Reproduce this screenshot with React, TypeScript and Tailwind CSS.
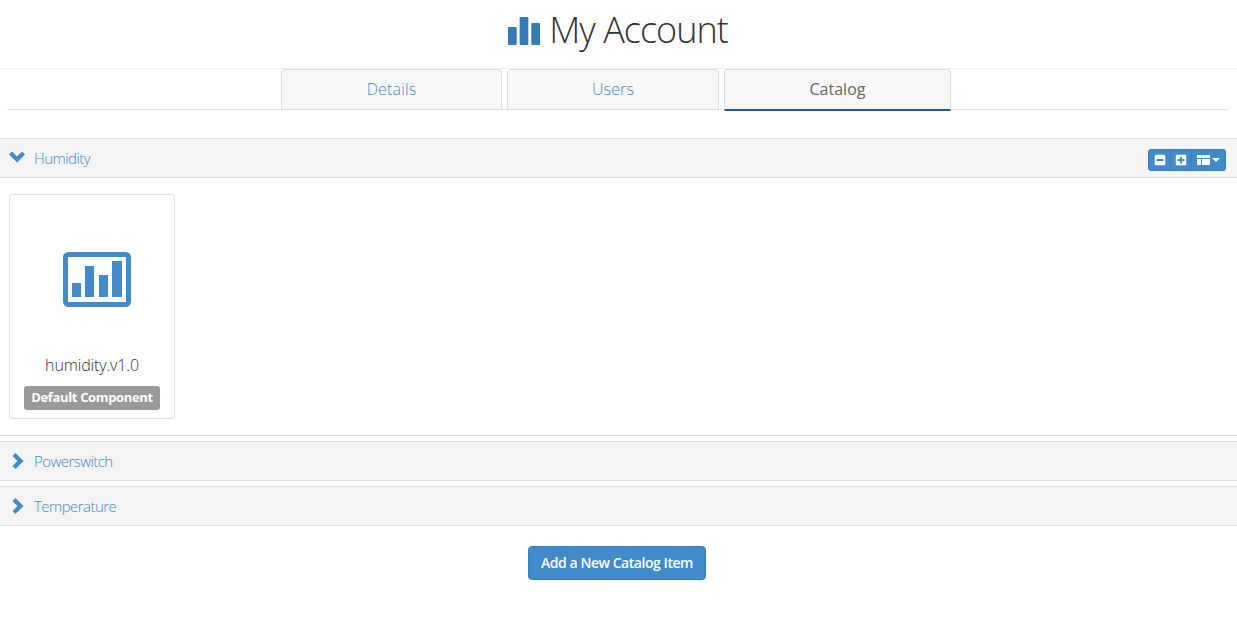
import { FaMinusSquare, FaPlusSquare } from "react-icons/fa"

const font = "font-['Open_Sans',sans-serif]"

const HeaderIcon = () => (
  <svg width="32" height="28" viewBox="0 0 33 28" preserveAspectRatio="none" className="mt-[2px]">
    <rect x="0" y="10" width="9" height="18" rx="1" fill="#337ab7" />
    <rect x="12" y="0" width="9" height="28" rx="1" fill="#337ab7" />
    <rect x="24" y="6" width="9" height="22" rx="1" fill="#337ab7" />
  </svg>
)

const ChartIcon = () => (
  <svg width="68" height="55" viewBox="0 0 68 55">
    <rect x="2.5" y="2.5" width="63" height="50" rx="3" fill="none" stroke="#428bca" strokeWidth="5" />
    <rect x="9" y="31" width="9" height="14" fill="#428bca" />
    <rect x="22" y="14" width="9" height="31" fill="#428bca" />
    <rect x="36" y="23" width="9" height="22" fill="#428bca" />
    <rect x="49" y="9" width="10" height="36" fill="#428bca" />
  </svg>
)

const ChevronDown = () => (
  <svg width="16" height="12" viewBox="0 0 16 12">
    <path d="M3 0.5 L8 5.5 L13 0.5 L16 3.5 L8 11.5 L0 3.5 Z" fill="#428bca" />
  </svg>
)

const ChevronRight = () => (
  <svg width="12" height="16" viewBox="0 0 12 16">
    <path d="M0.5 3 L5.5 8 L0.5 13 L3.5 16 L11.5 8 L3.5 0 Z" fill="#428bca" />
  </svg>
)

const TableIcon = () => (
  <svg width="13" height="10" viewBox="0 0 13 10">
    <path d="M0 0 H13 V3 H0 Z M0 4 H4 V10 H0 Z M5 4 H13 V10 H5 Z" fill="#fff" />
  </svg>
)

const Tab = ({ label, width, active }: { label: string; width: string; active?: boolean }) => (
  <div
    className={`${width} rounded-t border border-[#ddd] bg-[#f8f8f8] flex items-center justify-center text-[16px] ${
      active
        ? "h-[42px] -mb-[2px] pb-[1px] border-b-2 border-b-[#245a8d] text-[#666]"
        : "h-[41px] -mb-px pb-[2px] text-[#428bca] font-light tracking-[0.15px]"
    }`}
  >
    {label}
  </div>
)

const SectionBar = ({ label, open }: { label: string; open?: boolean }) => (
  <div className="h-10 flex items-center justify-between bg-[#f4f4f4] border-y border-[#ddd] pl-[9px] pr-[11px]">
    <div className="flex items-center text-[#428bca] text-[15px] font-light tracking-[-0.55px]">
      <span className={`w-[25px] flex ${open ? "-mt-[2px]" : "pl-[3px]"}`}>
        {open ? <ChevronDown /> : <ChevronRight />}
      </span>
      {label}
    </div>
    {open && (
      <div className="flex h-[22px] mt-[4px] items-center rounded-[3px] bg-[#428bca] border border-[#357ebd] text-white">
        <span className="w-[22px] h-full flex items-center justify-center border-r border-[#357ebd]">
          <FaMinusSquare size={12} />
        </span>
        <span className="w-[21px] h-full flex items-center justify-center border-r border-[#357ebd]">
          <FaPlusSquare size={12} />
        </span>
        <span className="w-[33px] h-full flex items-center justify-center gap-[2px]">
          <TableIcon />
          <span className="w-0 h-0 border-x-[4px] border-x-transparent border-t-[4px] border-t-white" />
        </span>
      </div>
    )}
  </div>
)

export default function App() {
  return (
    <div className={`${font} min-h-[643px] bg-white`}>
      <div className="h-[69px] flex items-center justify-center gap-[9px] border-b border-[#eee] pb-[8px] pr-[1px]">
        <HeaderIcon />
        <h1 className="text-[36px] font-light text-[#333] tracking-[-1px]">My Account</h1>
      </div>

      <div className="ml-[7px] mr-[10px] h-[41px] flex gap-[5px] pl-[274px] border-b border-[#ddd]">
        <Tab label="Details" width="w-[221px]" />
        <Tab label="Users" width="w-[212px]" />
        <Tab label="Catalog" width="w-[227px]" active />
      </div>

      <div className="mt-[28px]">
        <SectionBar label="Humidity" open />
        <div className="h-[258px] border-b border-[#ddd] pt-4 pl-[9px]">
          <div className="w-[166px] h-[225px] flex flex-col items-center rounded border border-[#ddd] pt-[57px]">
            <div className="ml-[10px]">
              <ChartIcon />
            </div>
            <div className="mt-[46px] text-[16px] font-light text-[#333] tracking-[-0.15px]">humidity.v1.0</div>
            <span className="mt-[9px] h-6 w-[136px] flex items-center justify-center rounded-[3px] bg-[#999] text-white text-[13px] font-bold tracking-[-0.35px]">
              Default Component
            </span>
          </div>
        </div>
        <div className="mt-[5px]">
          <SectionBar label="Powerswitch" />
        </div>
        <div className="mt-[5px]">
          <SectionBar label="Temperature" />
        </div>
      </div>

      <div className="flex justify-center mt-5 pr-[3px]">
        <button className="w-[178px] h-[34px] pb-[2px] rounded bg-[#428bca] border border-[#357ebd] text-white text-[14px] font-semibold tracking-[-0.45px]">
          Add a New Catalog Item
        </button>
      </div>
    </div>
  )
}
